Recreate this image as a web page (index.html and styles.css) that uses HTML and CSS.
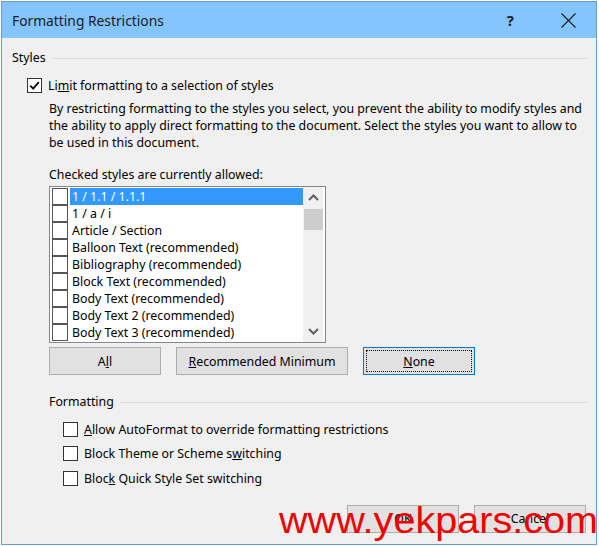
FILE: index.html
```html
<!DOCTYPE html>
<html lang="en">
<head>
    <meta charset="UTF-8">
    <title>Formatting Restrictions</title>
    <link rel="stylesheet" href="styles.css">
</head>
<body>

    <div class="dialog">
        <!-- Title bar -->
        <div class="titlebar">
            <span class="title">Formatting Restrictions</span>
            <span class="help">?</span>
            <svg class="close" width="15" height="15" viewBox="0 0 15 15">
                <path d="M0.5 0.5 L14.5 14.5 M14.5 0.5 L0.5 14.5" stroke="#1a1a1a" stroke-width="1.1" fill="none"/>
            </svg>
        </div>

        <div class="content">
            <!-- Styles group -->
            <div class="group-head">
                <span>Styles</span>
                <div class="rule"></div>
            </div>

            <div class="check-row limit">
                <span class="box checked">
                    <svg width="11" height="11" viewBox="0 0 11 11">
                        <path d="M1.2 5.6 L4.2 8.6 L9.8 2.2" stroke="#111" stroke-width="2" fill="none"/>
                    </svg>
                </span>
                <span>Li<u>m</u>it formatting to a selection of styles</span>
            </div>

            <div class="indent">
                <p class="intro">By restricting formatting to the styles you select, you prevent the ability to modify styles and<br>
                the ability to apply direct formatting to the document. Select the styles you want to allow to<br>
                be used in this document.</p>

                <div class="caption">Checked styles are currently allowed:</div>

                <div class="listbox">
                    <div class="items">
                        <div class="item selected"><span class="cell"></span><span class="label">1 / 1.1 / 1.1.1</span></div>
                        <div class="item"><span class="cell"></span><span class="label">1 / a / i</span></div>
                        <div class="item"><span class="cell"></span><span class="label">Article / Section</span></div>
                        <div class="item"><span class="cell"></span><span class="label">Balloon Text (recommended)</span></div>
                        <div class="item"><span class="cell"></span><span class="label">Bibliography (recommended)</span></div>
                        <div class="item"><span class="cell"></span><span class="label">Block Text (recommended)</span></div>
                        <div class="item"><span class="cell"></span><span class="label">Body Text (recommended)</span></div>
                        <div class="item"><span class="cell"></span><span class="label">Body Text 2 (recommended)</span></div>
                        <div class="item"><span class="cell"></span><span class="label">Body Text 3 (recommended)</span></div>
                    </div>
                    <div class="scrollbar">
                        <svg class="arrow" width="11" height="7" viewBox="0 0 11 7">
                            <path d="M1 6 L5.5 1.5 L10 6" stroke="#606060" stroke-width="2" fill="none"/>
                        </svg>
                        <div class="thumb"></div>
                        <div class="track"></div>
                        <svg class="arrow" width="11" height="7" viewBox="0 0 11 7">
                            <path d="M1 1 L5.5 5.5 L10 1" stroke="#606060" stroke-width="2" fill="none"/>
                        </svg>
                    </div>
                </div>

                <div class="btn-row">
                    <button class="btn w-small">A<u>l</u>l</button>
                    <button class="btn w-wide"><u>R</u>ecommended Minimum</button>
                    <button class="btn w-small focused"><span class="focus-ring"><u>N</u>one</span></button>
                </div>

                <div class="group-head formatting">
                    <span>Formatting</span>
                    <div class="rule"></div>
                </div>

                <div class="options">
                    <div class="check-row"><span class="box"></span><span><u>A</u>llow AutoFormat to override formatting restrictions</span></div>
                    <div class="check-row"><span class="box"></span><span>Block Theme or Scheme s<u>w</u>itching</span></div>
                    <div class="check-row"><span class="box"></span><span>Bloc<u>k</u> Quick Style Set switching</span></div>
                </div>
            </div>

            <div class="footer">
                <button class="btn w-small">OK</button>
                <button class="btn w-small">Cancel</button>
            </div>
        </div>

        <div class="watermark">www.yekpars.com</div>
    </div>

</body>
</html>
```

FILE: styles.css
```css
body {
    margin: 0;
    background: #ffffff;
    font-family: 'Noto Sans', 'Open Sans', sans-serif;
    font-size: 12.35px;
    color: #000;
    overflow: hidden;
}
.dialog {
    position: relative;
    margin: 1px 0 0 1px;
    width: 594px;
    height: 542px;
    border: 1px solid #6c9bd2;
    background: #f0f0f0;
}

/* Title bar */
.titlebar {
    height: 36px;
    background: #84c4ff;
    display: flex;
    align-items: center;
    padding-left: 10px;
}
.title {
    font-size: 13.8px;
    color: #1b1b1b;
    flex: 1;
}
.help {
    font-weight: bold;
    font-size: 15px;
    color: #1b1b1b;
    margin-right: 47px;
}
.close {
    margin-right: 20px;
}

/* Content */
.content {
    padding: 12px 8px 0 10px;
}
.group-head {
    display: flex;
    align-items: center;
    line-height: 16px;
    height: 16px;
}
.group-head .rule {
    flex: 1;
    height: 1px;
    background: #dcdcdc;
    margin-left: 6px;
}
.check-row {
    display: flex;
    align-items: center;
    height: 15px;
}
.check-row .box {
    width: 13px;
    height: 13px;
    border: 1px solid #333;
    background: #fff;
    margin-right: 6px;
    display: flex;
    align-items: center;
    justify-content: center;
}
.limit {
    margin: 12px 0 0 15px;
}
.indent {
    margin-left: 37px;
}
.intro {
    margin: 7px 0 0 0;
    line-height: 17px;
    white-space: nowrap;
}
.caption {
    margin-top: 15px;
    line-height: 17px;
}

/* List box */
.listbox {
    margin-top: 3px;
    width: 275px;
    height: 155px;
    border: 1px solid #828790;
    background: #fff;
    display: flex;
}
.items {
    flex: 1;
    padding: 1px 0 0 2px;
}
.item {
    height: 17px;
    display: flex;
    align-items: center;
}
.item .cell {
    width: 14px;
    height: 15px;
    border: 1px solid #555;
    background: #fff;
    margin-right: 2px;
}
.item .label {
    height: 17px;
    line-height: 17px;
    padding-left: 2px;
    flex: 1;
}
.item.selected .label {
    background: #3399ff;
    color: #fff;
}
.scrollbar {
    width: 20px;
    margin-right: 2px;
    background: #f0f0f0;
    display: flex;
    flex-direction: column;
    align-items: center;
}
.scrollbar .arrow {
    margin: 7px 0;
}
.thumb {
    width: 19px;
    height: 21px;
    background: #cdcdcd;
    margin-top: 1px;
}
.track {
    flex: 1;
}

/* Buttons */
.btn-row {
    display: flex;
    gap: 15px;
    margin-top: 4px;
}
.btn {
    height: 28px;
    border: 1px solid #adadad;
    background: #e1e1e1;
    font-family: 'Noto Sans', 'Open Sans', sans-serif;
    font-size: 12.35px;
    color: #000;
    padding: 0;
}
.w-small {
    width: 112px;
}
.w-wide {
    width: 172px;
}
.btn.focused {
    border-color: #0078d7;
    padding: 2px;
}
.focus-ring {
    display: flex;
    align-items: center;
    justify-content: center;
    height: 100%;
    border: 1px dotted #000;
    box-sizing: border-box;
}
.formatting {
    margin-top: 19px;
}
.options {
    margin: 7px 0 0 14px;
}
.options .check-row {
    height: 24.5px;
}

/* Footer */
.footer {
    display: flex;
    justify-content: flex-end;
    gap: 15px;
    margin-top: 14px;
    padding-right: 2px;
}

.watermark {
    position: absolute;
    left: 277px;
    top: 500px;
    font-family: 'Liberation Sans', Arial, sans-serif;
    font-size: 36px;
    line-height: 38px;
    color: #f00000;
    transform: scaleX(1.1);
    transform-origin: left top;
    white-space: nowrap;
}
```
